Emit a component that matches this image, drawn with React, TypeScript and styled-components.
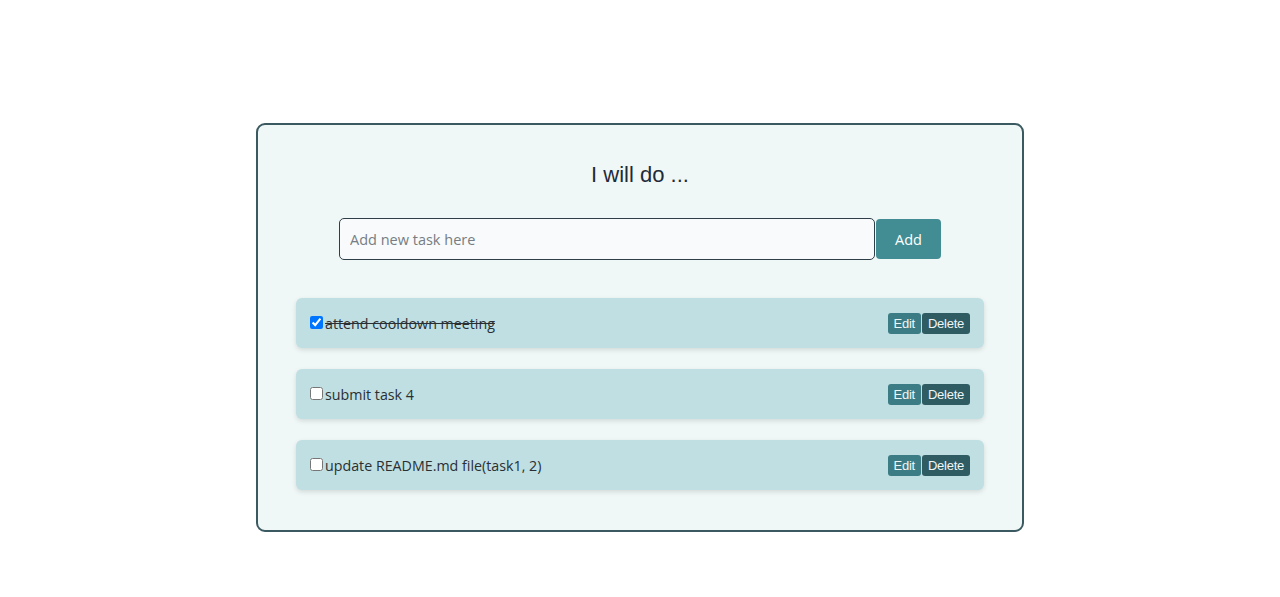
import React, { useState } from "react";
import styled, { createGlobalStyle } from "styled-components";

const Global = createGlobalStyle`
  html, body { margin: 0; padding: 0; background: #ffffff; }
  body { font-family: "Open Sans", "Noto Sans", sans-serif; }
`;

const Page = styled.div`
  display: flex;
  justify-content: center;
  padding-top: 123px;
`;

const Card = styled.div`
  box-sizing: border-box;
  width: 768px;
  padding: 37px 38px 40px;
  border: 2px solid #3b5960;
  border-radius: 9px;
  background: #eff8f7;
  display: flex;
  flex-direction: column;
  align-items: stretch;
`;

const Title = styled.h2`
  margin: 0;
  font-family: "Liberation Sans", Arial, sans-serif;
  font-weight: 400;
  font-size: 22px;
  line-height: 26px;
  color: #1f2b3a;
  text-align: center;
`;

const Form = styled.form`
  display: flex;
  justify-content: center;
  align-items: center;
  margin-top: 30px;
`;

const Input = styled.input`
  box-sizing: border-box;
  width: 536px;
  height: 42px;
  padding: 0 10px;
  border: 1px solid #2f3f48;
  border-radius: 5px;
  background: #f8fafb;
  font-family: "Open Sans", "Noto Sans", sans-serif;
  font-size: 14.5px;
  color: #222;
  outline: none;
  &::placeholder { color: #777d83; }
`;

const AddButton = styled.button`
  box-sizing: border-box;
  width: 65px;
  height: 40px;
  margin-left: 1px;
  border: none;
  border-radius: 4px;
  background: #428d94;
  color: #ffffff;
  font-family: "Open Sans", "Noto Sans", sans-serif;
  font-size: 14.5px;
  cursor: pointer;
`;

const List = styled.ul`
  list-style: none;
  margin: 38px 0 0;
  padding: 0;
  display: flex;
  flex-direction: column;
  gap: 21px;
`;

const Item = styled.li`
  box-sizing: border-box;
  height: 50px;
  padding: 0 14px;
  display: flex;
  align-items: center;
  justify-content: space-between;
  background: #bfdfe2;
  border-radius: 6px;
  box-shadow: 0 2px 5px rgba(0, 0, 0, 0.12);
`;

const Left = styled.label`
  display: flex;
  align-items: center;
`;

const Check = styled.input`
  width: 13px;
  height: 13px;
  margin: 0 2px 1px 0;
`;

const TaskText = styled.span<{ $done: boolean }>`
  font-size: 14.25px;
  color: #2a2f33;
  text-decoration: ${(p) => (p.$done ? "line-through" : "none")};
`;

const Actions = styled.div`
  display: flex;
  gap: 1px;
`;

const SmallButton = styled.button<{ $tone: "edit" | "delete" }>`
  height: 21px;
  padding: 1px 6px;
  border: none;
  border-radius: 3px;
  background: ${(p) => (p.$tone === "edit" ? "#3c7c84" : "#2e5c62")};
  color: #eef6f6;
  font-family: "Liberation Sans", Arial, sans-serif;
  font-size: 13px;
  letter-spacing: -0.25px;
  cursor: pointer;
`;

const initial = [
  { id: 1, text: "attend cooldown meeting", done: true },
  { id: 2, text: "submit task 4", done: false },
  { id: 3, text: "update README.md file(task1, 2)", done: false },
];

export default function App() {
  const [tasks, setTasks] = useState(initial);
  return (
    <>
      <Global />
      <Page>
        <Card>
          <Title>I will do ...</Title>
          <Form onSubmit={(e) => e.preventDefault()}>
            <Input placeholder="Add new task here" />
            <AddButton type="submit">Add</AddButton>
          </Form>
          <List>
            {tasks.map((t) => (
              <Item key={t.id}>
                <Left>
                  <Check
                    type="checkbox"
                    checked={t.done}
                    onChange={() =>
                      setTasks((ts) => ts.map((x) => (x.id === t.id ? { ...x, done: !x.done } : x)))
                    }
                  />
                  <TaskText $done={t.done}>{t.text}</TaskText>
                </Left>
                <Actions>
                  <SmallButton $tone="edit">Edit</SmallButton>
                  <SmallButton $tone="delete">Delete</SmallButton>
                </Actions>
              </Item>
            ))}
          </List>
        </Card>
      </Page>
    </>
  );
}
